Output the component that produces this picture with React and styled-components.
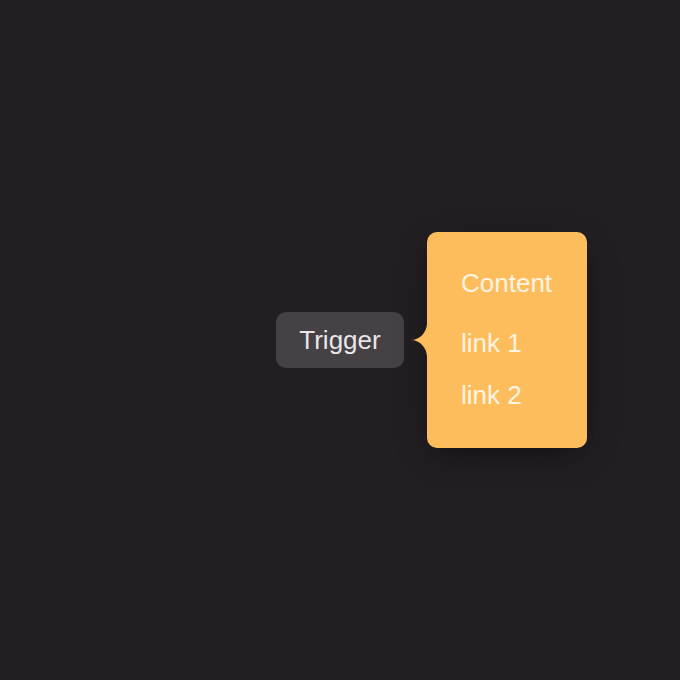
import React from 'react';
import styled, { createGlobalStyle } from 'styled-components';

const GlobalStyle = createGlobalStyle`
  html, body {
    margin: 0;
    padding: 0;
    background: #221e22;
    font-family: 'Liberation Sans', Arial, sans-serif;
  }
`;

const Page = styled.div`
  width: 100vw;
  height: 100vh;
  display: flex;
  align-items: center;
  justify-content: center;
`;

const Anchor = styled.div`
  position: relative;
`;

const Trigger = styled.button`
  width: 128px;
  height: 56px;
  border: none;
  border-radius: 10px;
  background: #454145;
  color: #e8e6e8;
  font-family: inherit;
  font-size: 26px;
  cursor: pointer;
`;

const Popover = styled.div`
  position: absolute;
  left: calc(100% + 23px);
  top: 50%;
  transform: translateY(-50%);
  width: 160px;
  height: 216px;
  box-sizing: border-box;
  padding: 35px 0 0 34px;
  border-radius: 10px;
  background: #fdbd5d;
  color: #fff4e2;
  box-shadow: 0 10px 38px -10px rgba(0, 0, 0, 0.45), 0 10px 20px -15px rgba(0, 0, 0, 0.3);
  display: flex;
  flex-direction: column;
`;

const Arrow = styled.svg`
  position: absolute;
  right: 100%;
  top: 50%;
  transform: translateY(-50%);
  display: block;
`;

const Title = styled.div`
  font-size: 26px;
  line-height: 32px;
  margin-bottom: 28px;
`;

const LinkItem = styled.a`
  font-size: 26px;
  line-height: 32px;
  color: inherit;
  text-decoration: none;
  margin-bottom: 20px;
`;

export default function App() {
  return (
    <>
      <GlobalStyle />
      <Page>
        <Anchor>
          <Trigger>Trigger</Trigger>
          <Popover>
            <Arrow width="16" height="34" viewBox="0 0 16 34">
              <path d="M16 0 C16 9 9 17 0 17 C9 17 16 25 16 34 Z" fill="#fdbd5d" />
            </Arrow>
            <Title>Content</Title>
            <LinkItem href="#">link 1</LinkItem>
            <LinkItem href="#">link 2</LinkItem>
          </Popover>
        </Anchor>
      </Page>
    </>
  );
}
